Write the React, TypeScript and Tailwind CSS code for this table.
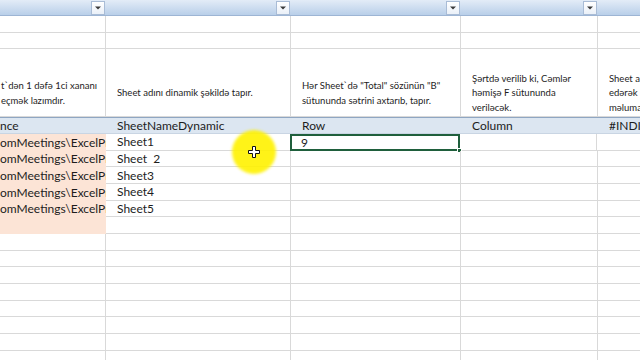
import React from "react";

const W = [106, 185, 170, 137, 60];
const F = { fontFamily: "Lato, 'Noto Sans', sans-serif" };

function Drop() {
  return (
    <div className="w-[14px] h-[14px] mr-[1px] border border-[#a9bcd6] bg-gradient-to-b from-white to-[#eaf0f8] flex items-center justify-center shrink-0">
      <svg width="6" height="4" viewBox="0 0 6 4"><path d="M0 0.5h6L3 3.5z" fill="#3a3a3a" /></svg>
    </div>
  );
}

function TopHeader() {
  return (
    <div className="flex h-[16px]">
      {W.map((w, i) => (
        <div
          key={i}
          style={{ width: w }}
          className="shrink-0 h-full bg-gradient-to-b from-[#e3ecf7] to-[#b9cfe9] border-b border-[#9db5d4] flex items-center justify-end"
        >
          {i < 4 && <Drop />}
        </div>
      ))}
    </div>
  );
}

function EmptyRow({ h }: { h: string }) {
  return (
    <div className={`flex ${h}`}>
      {W.map((w, i) => (
        <div key={i} style={{ width: w }} className="shrink-0 h-full border-r border-b border-[#d9d9d9]" />
      ))}
    </div>
  );
}

function TallRow() {
  const cells: string[][] = [
    ["t`dən 1 dəfə 1ci xananı", "eçmək lazımdır."],
    ["Sheet adını dinamik şəkildə tapır."],
    ["Hər Sheet`də \"Total\" sözünün \"B\"", "sütununda sətrini axtarıb, tapır."],
    ["Şərtdə verilib ki, Cəmlər", "həmişə F sütununda", "veriləcək."],
    ["Sheet adı", "edərək m", "məluma"],
  ];
  return (
    <div className="flex h-[68px]">
      {W.map((w, i) => (
        <div
          key={i}
          style={{ width: w }}
          className={`shrink-0 h-full border-r border-b border-[#d9d9d9] flex items-center pt-[22px] overflow-hidden ${i === 0 ? "pl-[1px]" : "pl-[11px]"}`}
        >
          <div className="text-[9.5px] leading-[14.5px] text-[#1d1d1d] whitespace-nowrap">
            {cells[i].map((l, j) => (
              <div key={j}>{l}</div>
            ))}
          </div>
        </div>
      ))}
    </div>
  );
}

function TableHeader() {
  const t = ["nce", "SheetNameDynamic", "Row", "Column", "#INDIR"];
  return (
    <div className="flex h-[17px] bg-[#dce6f1] border-t border-[#8fa6c2] border-b border-b-[#c9d5e3]">
      {W.map((w, i) => (
        <div
          key={i}
          style={{ width: w }}
          className={`shrink-0 h-full flex items-center overflow-hidden whitespace-nowrap text-[12px] leading-none text-[#1d1d1d] ${i === 0 ? "pl-0" : "pl-[11px]"}`}
        >
          {t[i]}
        </div>
      ))}
    </div>
  );
}

function DataRow({ a, b, c, peach, sel }: { a?: string; b?: string; c?: string; peach?: boolean; sel?: boolean }) {
  return (
    <div className="flex h-[16.67px]">
      <div
        style={{ width: W[0] }}
        className={`shrink-0 h-full overflow-hidden whitespace-nowrap flex items-center pt-[1px] text-[12px] leading-none text-[#1d1d1d] ${peach ? "bg-[#fce4d6]" : "border-r border-b border-[#d9d9d9]"}`}
      >
        {a}
      </div>
      <div
        style={{ width: W[1] }}
        className="shrink-0 h-full border-r border-b border-[#d9d9d9] pl-[11px] pt-[1px] flex items-center text-[12px] leading-none text-[#1d1d1d] whitespace-pre"
      >
        {b}
      </div>
      <div
        style={{ width: W[2] }}
        className={`shrink-0 h-full relative flex items-center pt-[1px] text-[12px] leading-none text-[#1d1d1d] ${sel ? "border-2 border-[#1f5f3c] pl-[9px] -ml-[1px] w-[171px]" : "border-r border-b border-[#d9d9d9] pl-[11px]"}`}
      >
        {c}
        {sel && <div className="absolute -right-[4px] -bottom-[4px] w-[5px] h-[5px] bg-[#1f5f3c] border border-white" />}
      </div>
      <div style={{ width: W[3] }} className="shrink-0 h-full border-r border-b border-[#d9d9d9]" />
      <div style={{ width: W[4] }} className="shrink-0 h-full border-r border-b border-[#d9d9d9]" />
    </div>
  );
}

export default function App() {
  const path = "omMeetings\\ExcelPro";
  return (
    <div style={F} className="w-[640px] h-[360px] overflow-hidden bg-white relative">
      <TopHeader />
      <EmptyRow h="h-[17px]" />
      <EmptyRow h="h-[16px]" />
      <TallRow />
      <TableHeader />
      <DataRow a={path} b="Sheet1" c="9" peach sel />
      <DataRow a={path} b="Sheet  2" peach />
      <DataRow a={path} b="Sheet3" peach />
      <DataRow a={path} b="Sheet4" peach />
      <DataRow a={path} b="Sheet5" peach />
      <DataRow peach />
      {Array.from({ length: 8 }).map((_, i) => (
        <DataRow key={i} />
      ))}
      <div className="absolute left-[232px] top-[130px] w-[44px] h-[44px] rounded-full bg-[#fff200] opacity-90 blur-[1.5px]" />
      <svg className="absolute left-[248px] top-[146px]" width="12" height="12" viewBox="0 0 12 12">
        <path d="M4.5 0.5h3v4h4v3h-4v4h-3v-4h-4v-3h4z" fill="#fff" stroke="#111" strokeWidth="1" />
      </svg>
    </div>
  );
}
